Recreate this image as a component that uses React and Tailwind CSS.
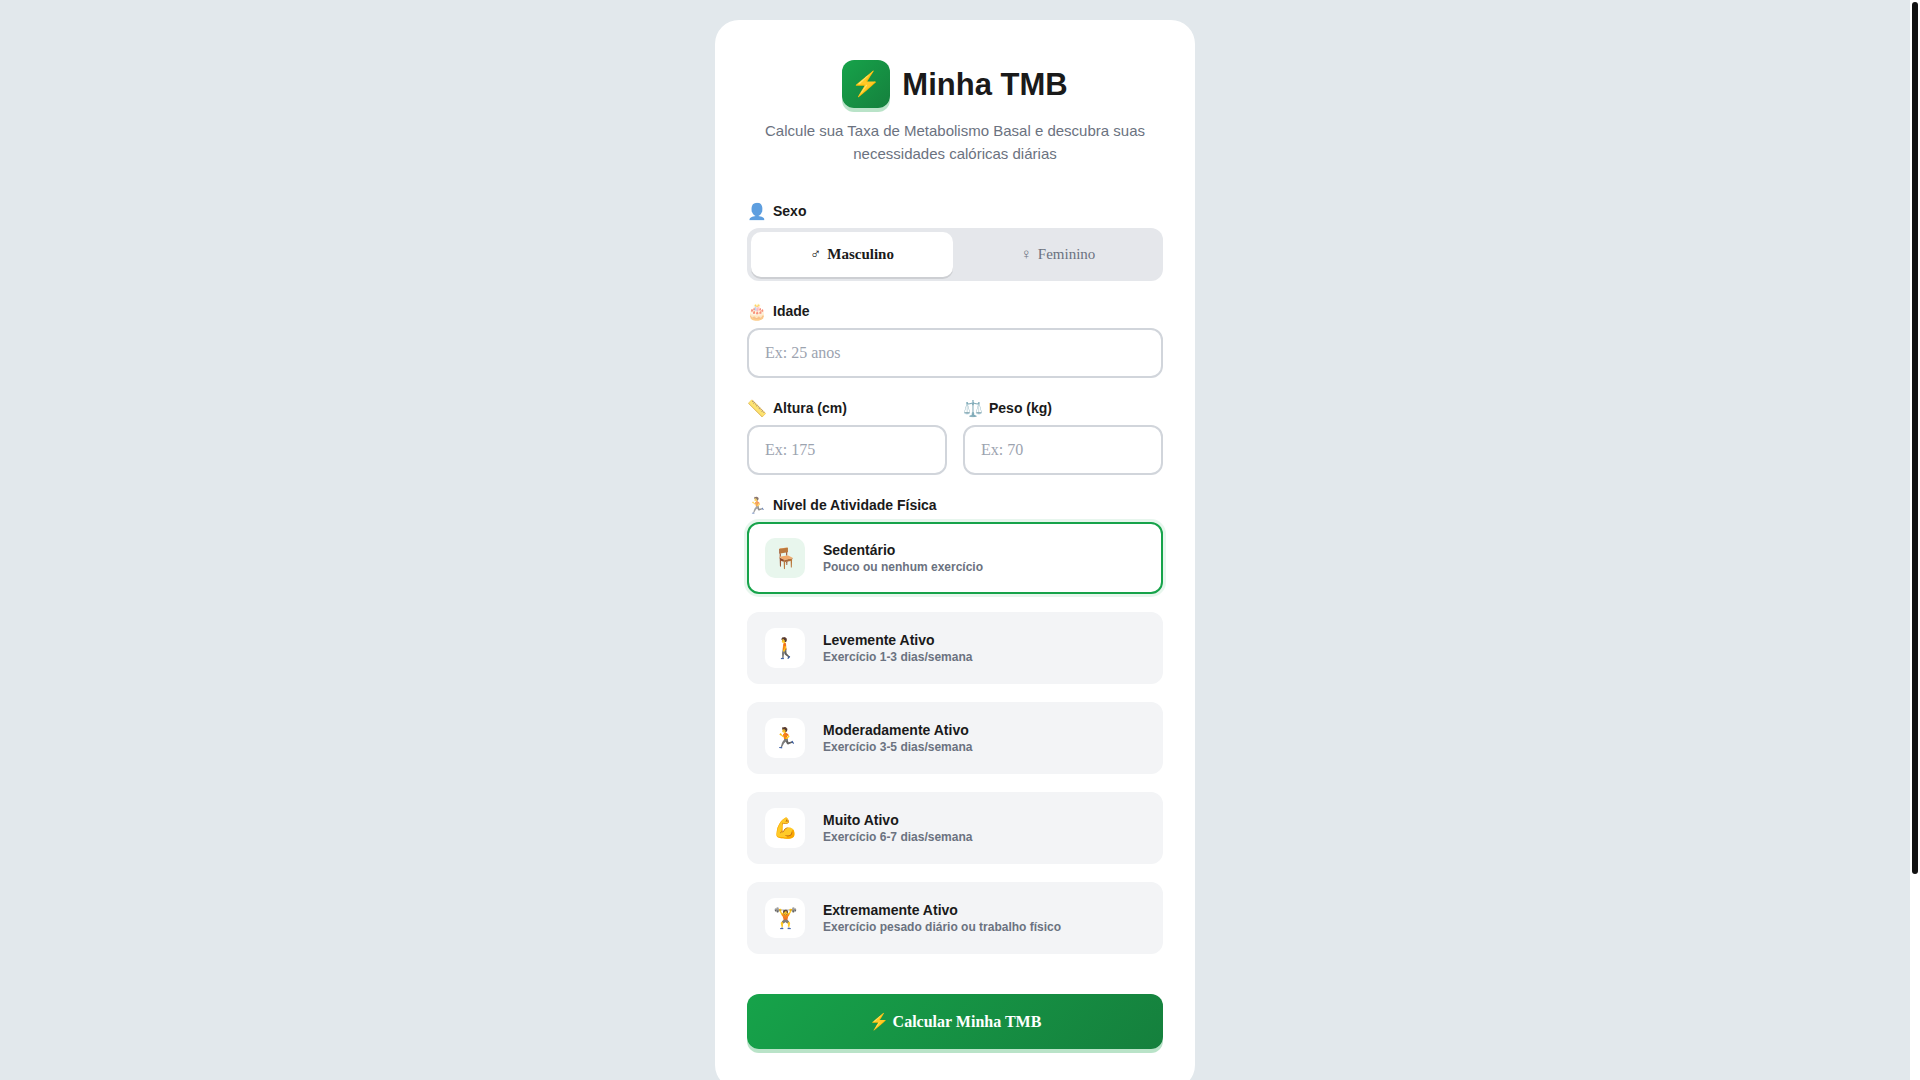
import React, { useState } from 'react';

const sexOptions = [
  { id: 'male', symbol: '♂', label: 'Masculino' },
  { id: 'female', symbol: '♀', label: 'Feminino' }
];

const activityLevels = [
  { id: 'sedentary', emoji: '🪑', name: 'Sedentário', description: 'Pouco ou nenhum exercício' },
  { id: 'light', emoji: '🚶', name: 'Levemente Ativo', description: 'Exercício 1-3 dias/semana' },
  { id: 'moderate', emoji: '🏃', name: 'Moderadamente Ativo', description: 'Exercício 3-5 dias/semana' },
  { id: 'very', emoji: '💪', name: 'Muito Ativo', description: 'Exercício 6-7 dias/semana' },
  { id: 'extreme', emoji: '🏋️', name: 'Extremamente Ativo', description: 'Exercício pesado diário ou trabalho físico' }
];

const labelClass = 'flex items-center gap-1.5 mb-1.5 text-sm leading-[21px] font-semibold text-[#1a1a1a]';

const LabelIcon = ({ children }) => (
  <span aria-hidden="true" className="text-base leading-[21px] opacity-70">{children}</span>
);

const NumberField = ({ id, emoji, label, placeholder, value, onChange }) => (
  <div className="flex-1 min-w-0">
    <label htmlFor={id} className={labelClass}>
      <LabelIcon>{emoji}</LabelIcon>
      {label}
    </label>
    <input
      id={id}
      type="text"
      inputMode="numeric"
      placeholder={placeholder}
      value={value}
      onChange={(e) => onChange(e.target.value)}
      className="block w-full px-4 py-3.5 border-2 border-[#d1d5db] rounded-xl bg-white font-['Liberation_Serif',serif] text-base leading-[18px] text-[#1a1a1a] placeholder:text-[#9ca3af] focus:outline-none focus:border-[#16a34a]"
    />
  </div>
);

const App = () => {
  const [sex, setSex] = useState('male');
  const [age, setAge] = useState('');
  const [height, setHeight] = useState('');
  const [weight, setWeight] = useState('');
  const [activity, setActivity] = useState('sedentary');

  const handleSubmit = (e) => {
    e.preventDefault();
  };

  return (
    <div className="flex h-screen bg-[#e2e8ec] font-['Liberation_Sans',sans-serif]">
      <div className="flex-1 min-w-0 overflow-y-auto [scrollbar-width:none] px-5 pt-5 pb-60">
        <main className="max-w-[480px] mx-auto bg-white rounded-3xl px-8 py-10">
          <header className="text-center mb-9">
            <div className="flex items-center justify-center gap-3 mb-[11px]">
              <div className="flex items-center justify-center w-12 h-12 rounded-xl bg-linear-135 from-[#16a34a] to-[#15803d] shadow-[0_4px_0_rgba(22,163,74,0.3)] text-2xl">
                ⚡
              </div>
              <h1 className="text-[31px] leading-[37px] font-bold text-[#1a1a1a]">Minha TMB</h1>
            </div>
            <p className="text-[15px] leading-[23px] text-[#6b7280]">
              Calcule sua Taxa de Metabolismo Basal e descubra suas necessidades calóricas diárias
            </p>
          </header>

          <form onSubmit={handleSubmit}>
            <div className="flex flex-col gap-5">
              {/* Sexo */}
              <div role="group" aria-labelledby="sex-label">
                <div id="sex-label" className={labelClass}>
                  <LabelIcon>👤</LabelIcon>
                  Sexo
                </div>
                <div className="flex gap-1 p-1 rounded-xl bg-[#e5e7eb]">
                  {sexOptions.map(option => (
                    <button
                      key={option.id}
                      type="button"
                      aria-pressed={sex === option.id}
                      onClick={() => setSex(option.id)}
                      className={`flex-1 flex items-center justify-center gap-1.5 py-3 rounded-[10px] font-['Liberation_Serif',serif] text-[15px] leading-[21px] ${
                        sex === option.id
                          ? 'bg-white font-semibold text-[#1a1a1a] shadow-[0_2px_0_rgba(0,0,0,0.1)]'
                          : 'font-medium text-[#6b7280]'
                      }`}
                    >
                      <span aria-hidden="true">{option.symbol}</span>
                      {option.label}
                    </button>
                  ))}
                </div>
              </div>

              <NumberField id="age" emoji="🎂" label="Idade" placeholder="Ex: 25 anos" value={age} onChange={setAge} />

              <div className="flex gap-4">
                <NumberField id="height" emoji="📏" label="Altura (cm)" placeholder="Ex: 175" value={height} onChange={setHeight} />
                <NumberField id="weight" emoji="⚖️" label="Peso (kg)" placeholder="Ex: 70" value={weight} onChange={setWeight} />
              </div>

              {/* Nível de atividade */}
              <div role="radiogroup" aria-labelledby="activity-label">
                <div id="activity-label" className={labelClass}>
                  <LabelIcon>🏃</LabelIcon>
                  Nível de Atividade Física
                </div>
                <div className="flex flex-col gap-[18px]">
                  {activityLevels.map(level => (
                    <label
                      key={level.id}
                      className={`relative flex items-center gap-[18px] px-4 py-3.5 border-2 rounded-xl cursor-pointer ${
                        activity === level.id
                          ? 'bg-white border-[#16a34a] shadow-[0_0_0_3px_rgba(22,163,74,0.1)]'
                          : 'bg-[#f3f4f6] border-[#f3f4f6]'
                      }`}
                    >
                      <input
                        type="radio"
                        name="activity"
                        value={level.id}
                        checked={activity === level.id}
                        onChange={() => setActivity(level.id)}
                        className="sr-only"
                      />
                      <span
                        aria-hidden="true"
                        className={`flex items-center justify-center w-10 h-10 rounded-[10px] text-xl ${
                          activity === level.id ? 'bg-[#e8f6ed]' : 'bg-white'
                        }`}
                      >
                        {level.emoji}
                      </span>
                      <span className="flex flex-col font-semibold">
                        <span className="text-sm leading-[18px] text-[#1a1a1a]">{level.name}</span>
                        <span className="text-xs leading-4 text-[#6b7280]">{level.description}</span>
                      </span>
                    </label>
                  ))}
                </div>
              </div>
            </div>

            <button
              type="submit"
              className="w-full mt-10 py-4 rounded-xl bg-linear-135 from-[#16a34a] to-[#15803d] shadow-[0_4px_0_rgba(22,163,74,0.3)] font-['Liberation_Serif',serif] text-base leading-[23px] font-bold text-white"
            >
              ⚡ Calcular Minha TMB
            </button>
          </form>
        </main>
      </div>

      {/* Scroll rail */}
      <div aria-hidden="true" className="w-2.5 p-0.5 bg-white">
        <div className="h-[81%] rounded-full bg-[#111111]" />
      </div>
    </div>
  );
};

export default App;
